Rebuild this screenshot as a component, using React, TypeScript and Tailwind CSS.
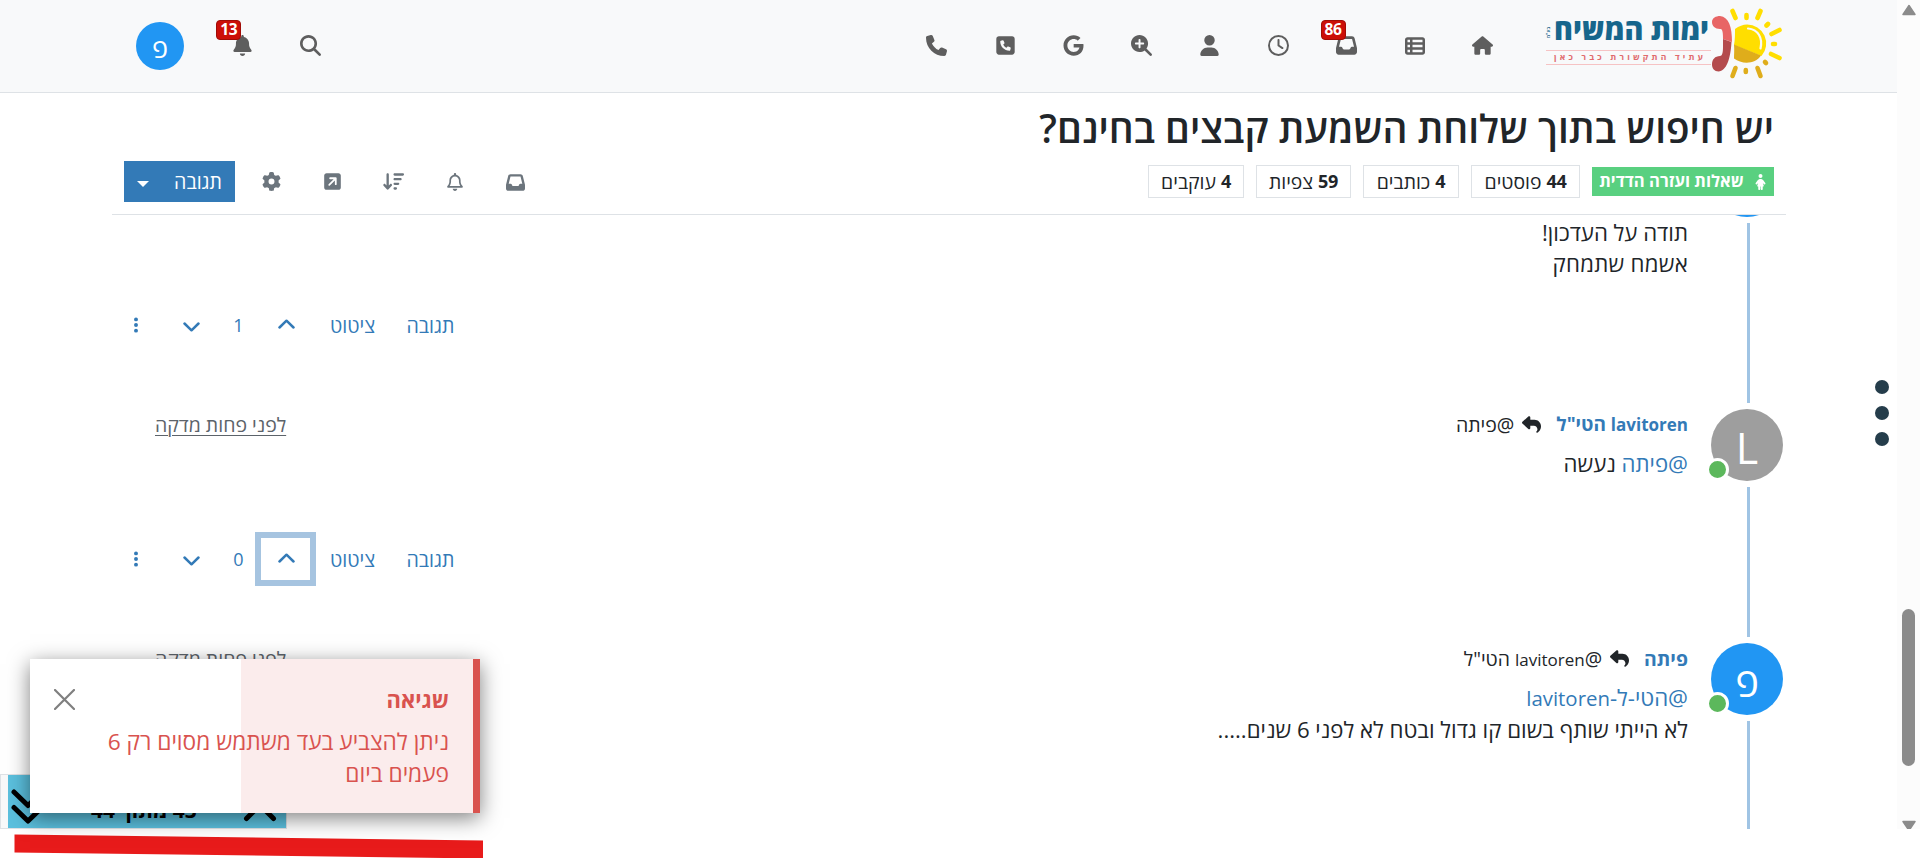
import type { ReactNode } from "react";
import {
  FaArrowDownWideShort,
  FaBell,
  FaChildDress,
  FaEllipsisVertical,
  FaGear,
  FaGoogle,
  FaHouse,
  FaInbox,
  FaMagnifyingGlass,
  FaMagnifyingGlassPlus,
  FaPhone,
  FaRegBell,
  FaRegClock,
  FaReply,
  FaSquareArrowUpRight,
  FaSquarePhone,
  FaTableList,
  FaUser,
} from "react-icons/fa6";

function Logo() {
  return (
    <svg className="h-[92px] w-[240px]" viewBox="1544 0 240 92">
      <text x="1709" y="40" textAnchor="start" direction="rtl" fontFamily="Open Sans" fontWeight="800" fontSize="30" fill="#17668c" textLength="155" lengthAdjust="spacingAndGlyphs">ימות המשיח</text>
      <text transform="translate(1549.500 38) rotate(-90)" direction="ltr" fontFamily="Open Sans" fontWeight="700" fontSize="4.500" fill="#17668c" textLength="11">בע"מ</text>
      <path d="M1546 50.500H1711M1546 64.500H1711" stroke="#f6c3c4" strokeWidth="1" />
      <text x="1703" y="60" textAnchor="start" direction="rtl" fontFamily="Open Sans" fontWeight="700" fontSize="8.500" fill="#e06a6c" textLength="149" lengthAdjust="spacing">עתיד התקשורת כבר כאן</text>
      <path d="M1712 22c0-4 4-6 8-6 9 1 12 11 12 26l-9-3c0-9-1-10-3-10-5 0-8-3-8-7z" fill="#e86565" />
      <path d="M1723 39l8.500 3c-1 17-5 29-13 29.500-4 0-6.500-3-6.500-7 0-5 3-8.500 8-8.500 2 0 3-3 3-9z" fill="#b44b4d" />
      <path d="M1735 29c4-3 8-4.500 12-4.500a19 19 0 0 1 14.500 31.500L1734 45c1-5 1-11 1-16z" fill="#ffde00" />
      <path d="M1734 44.500l27 11c-6 9-19 9-27 3 0-4 .5-8 0-14z" fill="#dfad1b" />
      <path d="M1748 28.500c10 1 15 9 12.500 20" stroke="#f8f9fa" strokeWidth="2.200" strokeLinecap="round" fill="none" />
      <g stroke="#ffde00" strokeWidth="4.600" strokeLinecap="round">
        <path d="M1732.500 11l3 7M1760.500 11l-3 7M1746.500 15v3M1768 24l-1.500 1.500M1779.500 30l-8 4M1773 44h2M1771 54l8.500 4" />
      </g>
      <g stroke="#dfad1b" strokeWidth="4.600" strokeLinecap="round">
        <path d="M1735.500 68l-3 8M1745.800 70v2M1757.500 68l3 8M1765 62l1 1" />
      </g>
    </svg>
  );
}

function NavItem({ children, badge }: { children: ReactNode; badge?: string }) {
  return (
    <div className="relative flex h-[92px] w-[68.25px] items-center justify-center pb-[1px] text-[21px] text-[#5e5e5e]">
      {children}
      {badge && (
        <span className="absolute right-[35px] top-[20px] flex h-5 items-center rounded-[4px] border border-[#a00c06] bg-[#cc0f08] px-[3px] text-[15.5px] font-bold leading-none tracking-[-0.4px] text-white">
          {badge}
        </span>
      )}
    </div>
  );
}

function Chevron({ down }: { down?: boolean }) {
  return (
    <svg className="h-[10px] w-[17px]" viewBox="0 0 17 10" fill="none" stroke="currentColor" strokeWidth="2.500" strokeLinecap="round" strokeLinejoin="round">
      <path d={down ? "M1.500 1.500L8.500 8.300L15.500 1.500" : "M1.500 8.500L8.500 1.700L15.500 8.500"} />
    </svg>
  );
}

function Stat({ value, label, width }: { value: string; label: string; width: string }) {
  return (
    <div className={`${width} flex h-[33px] items-center justify-center gap-[5px] border border-[#dee2e6] text-[19.4px] text-[#212529]`}>
      <b className="text-[18px] tracking-[-0.3px]">{value}</b>
      <span>{label}</span>
    </div>
  );
}

function Actions({ votes, focused }: { votes: string; focused?: boolean }) {
  return (
    <div dir="ltr" className="absolute bottom-[63px] left-[112px] flex h-[42px] items-center text-[19.6px] text-[#337ab7]">
      <span className="flex w-12 justify-center"><FaEllipsisVertical className="size-[18px]" /></span>
      <span className="flex w-[62px] justify-center pt-[3px]"><Chevron down /></span>
      <span className="w-[33px] text-center text-[18px]">{votes}</span>
      <span className={`flex h-[54px] w-[61px] items-center justify-center pb-[2px] pl-[1px] ${focused ? "border-[6px] border-[#a6c4e0]" : ""}`}>
        <Chevron />
      </span>
      <span className="w-[73px] text-center">ציטוט</span>
      <span className="w-[83px] text-center">תגובה</span>
    </div>
  );
}

function Avatar({ letter, color }: { letter: ReactNode; color: string }) {
  return (
    <div className={`relative flex size-[72px] items-center justify-center rounded-full pt-1 text-[43px] leading-none text-white ${color}`}>
      {letter}
      <span className="absolute -left-[5px] bottom-0 size-[23px] rounded-full border-[3px] border-white bg-[#5cb85c]" />
    </div>
  );
}

function Time() {
  return <span className="absolute left-[155px] top-0 text-[19.5px] leading-[31px] text-[#5c636a] underline decoration-1 underline-offset-[3px]">לפני פחות מדקה</span>;
}

export default function App() {
  return (
    <div dir="rtl" className="relative h-[858px] w-[1920px] overflow-hidden bg-white font-['Open_Sans',sans-serif] text-[#212529]">
      <div dir="ltr" className="flex">
        <div dir="rtl" className="relative h-[829px] w-[1897px] overflow-hidden">
          <header className="flex h-[93px] items-center border-b border-[#dee2e6] bg-[#f8f9fa] pr-[113px] pl-28">
            <Logo />
            <nav className="mr-[27px] flex">
              <NavItem><FaHouse /></NavItem>
              <NavItem><FaTableList className="size-[20px]" /></NavItem>
              <NavItem badge="86"><FaInbox /></NavItem>
              <NavItem><FaRegClock /></NavItem>
              <NavItem><FaUser /></NavItem>
              <NavItem><FaMagnifyingGlassPlus /></NavItem>
              <NavItem><FaGoogle /></NavItem>
              <NavItem><FaSquarePhone /></NavItem>
              <NavItem><FaPhone /></NavItem>
            </nav>
            <div className="mr-auto flex items-center">
              <NavItem><FaMagnifyingGlass /></NavItem>
              <NavItem badge="13"><FaBell /></NavItem>
              <div className="mx-6 flex size-12 items-center justify-center rounded-full bg-[#2196f3] pt-[2px] text-[27px] font-medium leading-none text-white">פ</div>
            </div>
          </header>

          <section className="mr-[111px] ml-28 h-[122px] border-b border-[#dee2e6] px-3">
            <h1 className="h-[68px] pt-[9px] text-[38.8px] font-semibold leading-[52px]">יש חיפוש בתוך שלוחת השמעת קבצים בחינם?</h1>
            <div className="flex h-[41px] items-center gap-3">
              <div className="flex h-[29px] w-[182px] items-center justify-center gap-[12px] bg-[#59d080] pr-[2px] text-[16.6px] font-bold text-white">
                <FaChildDress className="-mx-[2px] h-4 w-[13px]" />
                <span>שאלות ועזרה הדדית</span>
              </div>
              <Stat width="w-[109px]" value="44" label="פוסטים" />
              <Stat width="w-[96px]" value="4" label="כותבים" />
              <Stat width="w-[95px]" value="59" label="צפיות" />
              <Stat width="w-[96px]" value="4" label="עוקבים" />
              <div className="mr-auto flex items-center text-[19px] text-[#6c757d]">
                <span className="flex w-[61px] justify-center pt-px"><FaInbox /></span>
                <span className="flex w-[61px] justify-center"><FaRegBell className="size-[18px]" /></span>
                <span className="flex w-[61px] justify-center"><FaArrowDownWideShort className="size-[21px]" /></span>
                <span className="flex w-[61px] justify-center"><FaSquareArrowUpRight /></span>
                <span className="flex w-[61px] justify-center"><FaGear /></span>
                <button className="mr-[6px] flex h-[41px] w-[111px] items-center justify-between bg-[#337ab7] pr-[13px] pl-[13px] text-[19.6px] text-white">
                  <span>תגובה</span>
                  <span className="mt-1 border-x-[6px] border-t-[6px] border-x-transparent border-t-white" />
                </button>
              </div>
            </div>
          </section>

          <main className="overflow-hidden text-[22.2px] leading-[31px]">
            <article className="relative flex h-[194px] gap-[23px] pr-[114px]">
              <div className="flex w-[72px] flex-col items-center">
                <svg className="h-[2px] w-6" viewBox="0 0 24 2"><path d="M0 0H24Q12 4 0 0z" fill="#2196f3" /></svg>
                <div className="mt-[6px] mr-0 ml-[3px] h-[180px] w-[3px] bg-[#a0c4e4]" />
              </div>
              <div className="pt-[2px]">
                <p>תודה על העדכון!</p>
                <p className="tracking-[0.25px]">אשמח שתמחק</p>
              </div>
              <Actions votes="1" />
            </article>

            <article className="relative flex h-[234px] gap-[23px] pr-[114px]">
              <div className="flex w-[72px] flex-col items-center">
                <Avatar letter="L" color="bg-[#9e9e9e]" />
                <div className="mt-[6px] mr-0 ml-[3px] h-[150px] w-[3px] bg-[#a0c4e4]" />
              </div>
              <div>
                <div className="flex h-[31px] items-center text-[19px]">
                  <b className="text-[#337ab7]"><span className="text-[17px]">lavitoren</span> הטי"ל</b>
                  <FaReply className="mr-[15px] ml-[8px] size-[19px]" />
                  <span className="text-[19.5px]">@פיתה</span>
                </div>
                <p className="mt-[8px]"><span className="text-[#337ab7]">@פיתה</span> נעשה</p>
              </div>
              <Time />
              <Actions votes="0" focused />
            </article>

            <article className="relative flex h-[234px] gap-[23px] pr-[114px]">
              <div className="flex w-[72px] flex-col items-center">
                <Avatar letter={<span className="pt-[2px] text-[40px] font-medium">פ</span>} color="bg-[#2196f3]" />
                <div className="mt-[6px] mr-0 ml-[3px] h-[150px] w-[3px] bg-[#a0c4e4]" />
              </div>
              <div>
                <div className="flex h-[31px] items-center text-[19.4px]">
                  <b className="text-[#337ab7]">פיתה</b>
                  <FaReply className="mr-[15px] ml-[8px] size-[19px]" />
                  <span>@<span className="text-[17px]">lavitoren</span> הטי"ל</span>
                </div>
                <p className="mt-[8px] text-[#337ab7]">@הטי-ל-<span className="text-[20.4px]">lavitoren</span></p>
                <p>לא הייתי שותף בשום קו גדול ובטח לא לפני 6 שנים.....</p>
              </div>
              <Time />
            </article>
          </main>

          <div className="absolute top-[380px] right-[8px] flex flex-col gap-3">
            <span className="size-[14px] rounded-full bg-[#253d4b]" />
            <span className="size-[14px] rounded-full bg-[#253d4b]" />
            <span className="size-[14px] rounded-full bg-[#253d4b]" />
          </div>
        </div>
        <div className="flex h-[829px] w-[23px] flex-col items-center overflow-hidden bg-[#fcfcfc]">
          <svg className="mt-1 h-3 w-4 shrink-0" viewBox="0 0 16 12"><path d="M8 1.500L14 10.500H2z" fill="#8b8b8b" stroke="#8b8b8b" strokeWidth="1.500" strokeLinejoin="round" /></svg>
          <div className="mt-[593px] h-[157px] w-[13px] shrink-0 rounded-full bg-[#8b8b8b]" />
          <svg className="mt-[54px] h-3 w-4 shrink-0" viewBox="0 0 16 12"><path d="M8 10.500L14 1.500H2z" fill="#8b8b8b" stroke="#8b8b8b" strokeWidth="1.500" strokeLinejoin="round" /></svg>
        </div>
      </div>

      <div dir="ltr" className="absolute top-[774px] left-0 flex h-[55px] w-[287px] border border-[#dee2e6] bg-[#f8f9fa] pl-[7px]">
        <div className="relative flex grow items-center justify-center bg-[#5bc0de] pt-[18px] text-[21px] font-bold text-black">
          <span dir="rtl" className="mr-[6px]">43 מתוך 44</span>
          <svg className="absolute top-0 left-0 h-[54px] w-[278px]" viewBox="0 0 278 54" fill="none" stroke="#000" strokeWidth="5" strokeLinecap="round" strokeLinejoin="round">
            <path d="M6 17L20 30.500L34 17M6 32.500L20 46L34 32.500M238.500 43.500L252 30L265.500 43.500" />
          </svg>
        </div>
      </div>

      <svg className="absolute top-[833px] left-0 h-[25px] w-[490px]" viewBox="0 0 490 25"><path d="M14.500 1.500L483 7.500V25.500L14.500 19.500z" fill="#e81b1b" /></svg>

      <div className="absolute top-[659px] left-[30px] h-[154px] w-[450px] border-r-[7px] border-[#d9534f] bg-[linear-gradient(to_left,#fbecec_232px,#fff_232px)] pt-[23px] pr-[24px] text-[#d9534f] shadow-[0_5px_20px_rgba(0,0,0,0.5)]">
        <div className="flex items-center justify-between pl-6">
          <b className="text-[22px] leading-[34px]">שגיאה</b>
          <svg className="size-[21px]" viewBox="0 0 21 21"><path d="M1 1L20 20M20 1L1 20" stroke="#7f7f7f" strokeWidth="2.200" strokeLinecap="round" /></svg>
        </div>
        <p className="mt-[10px] w-[355px] text-[22.7px] leading-8">ניתן להצביע בעד משתמש מסוים רק 6 פעמים ביום</p>
      </div>
    </div>
  );
}
